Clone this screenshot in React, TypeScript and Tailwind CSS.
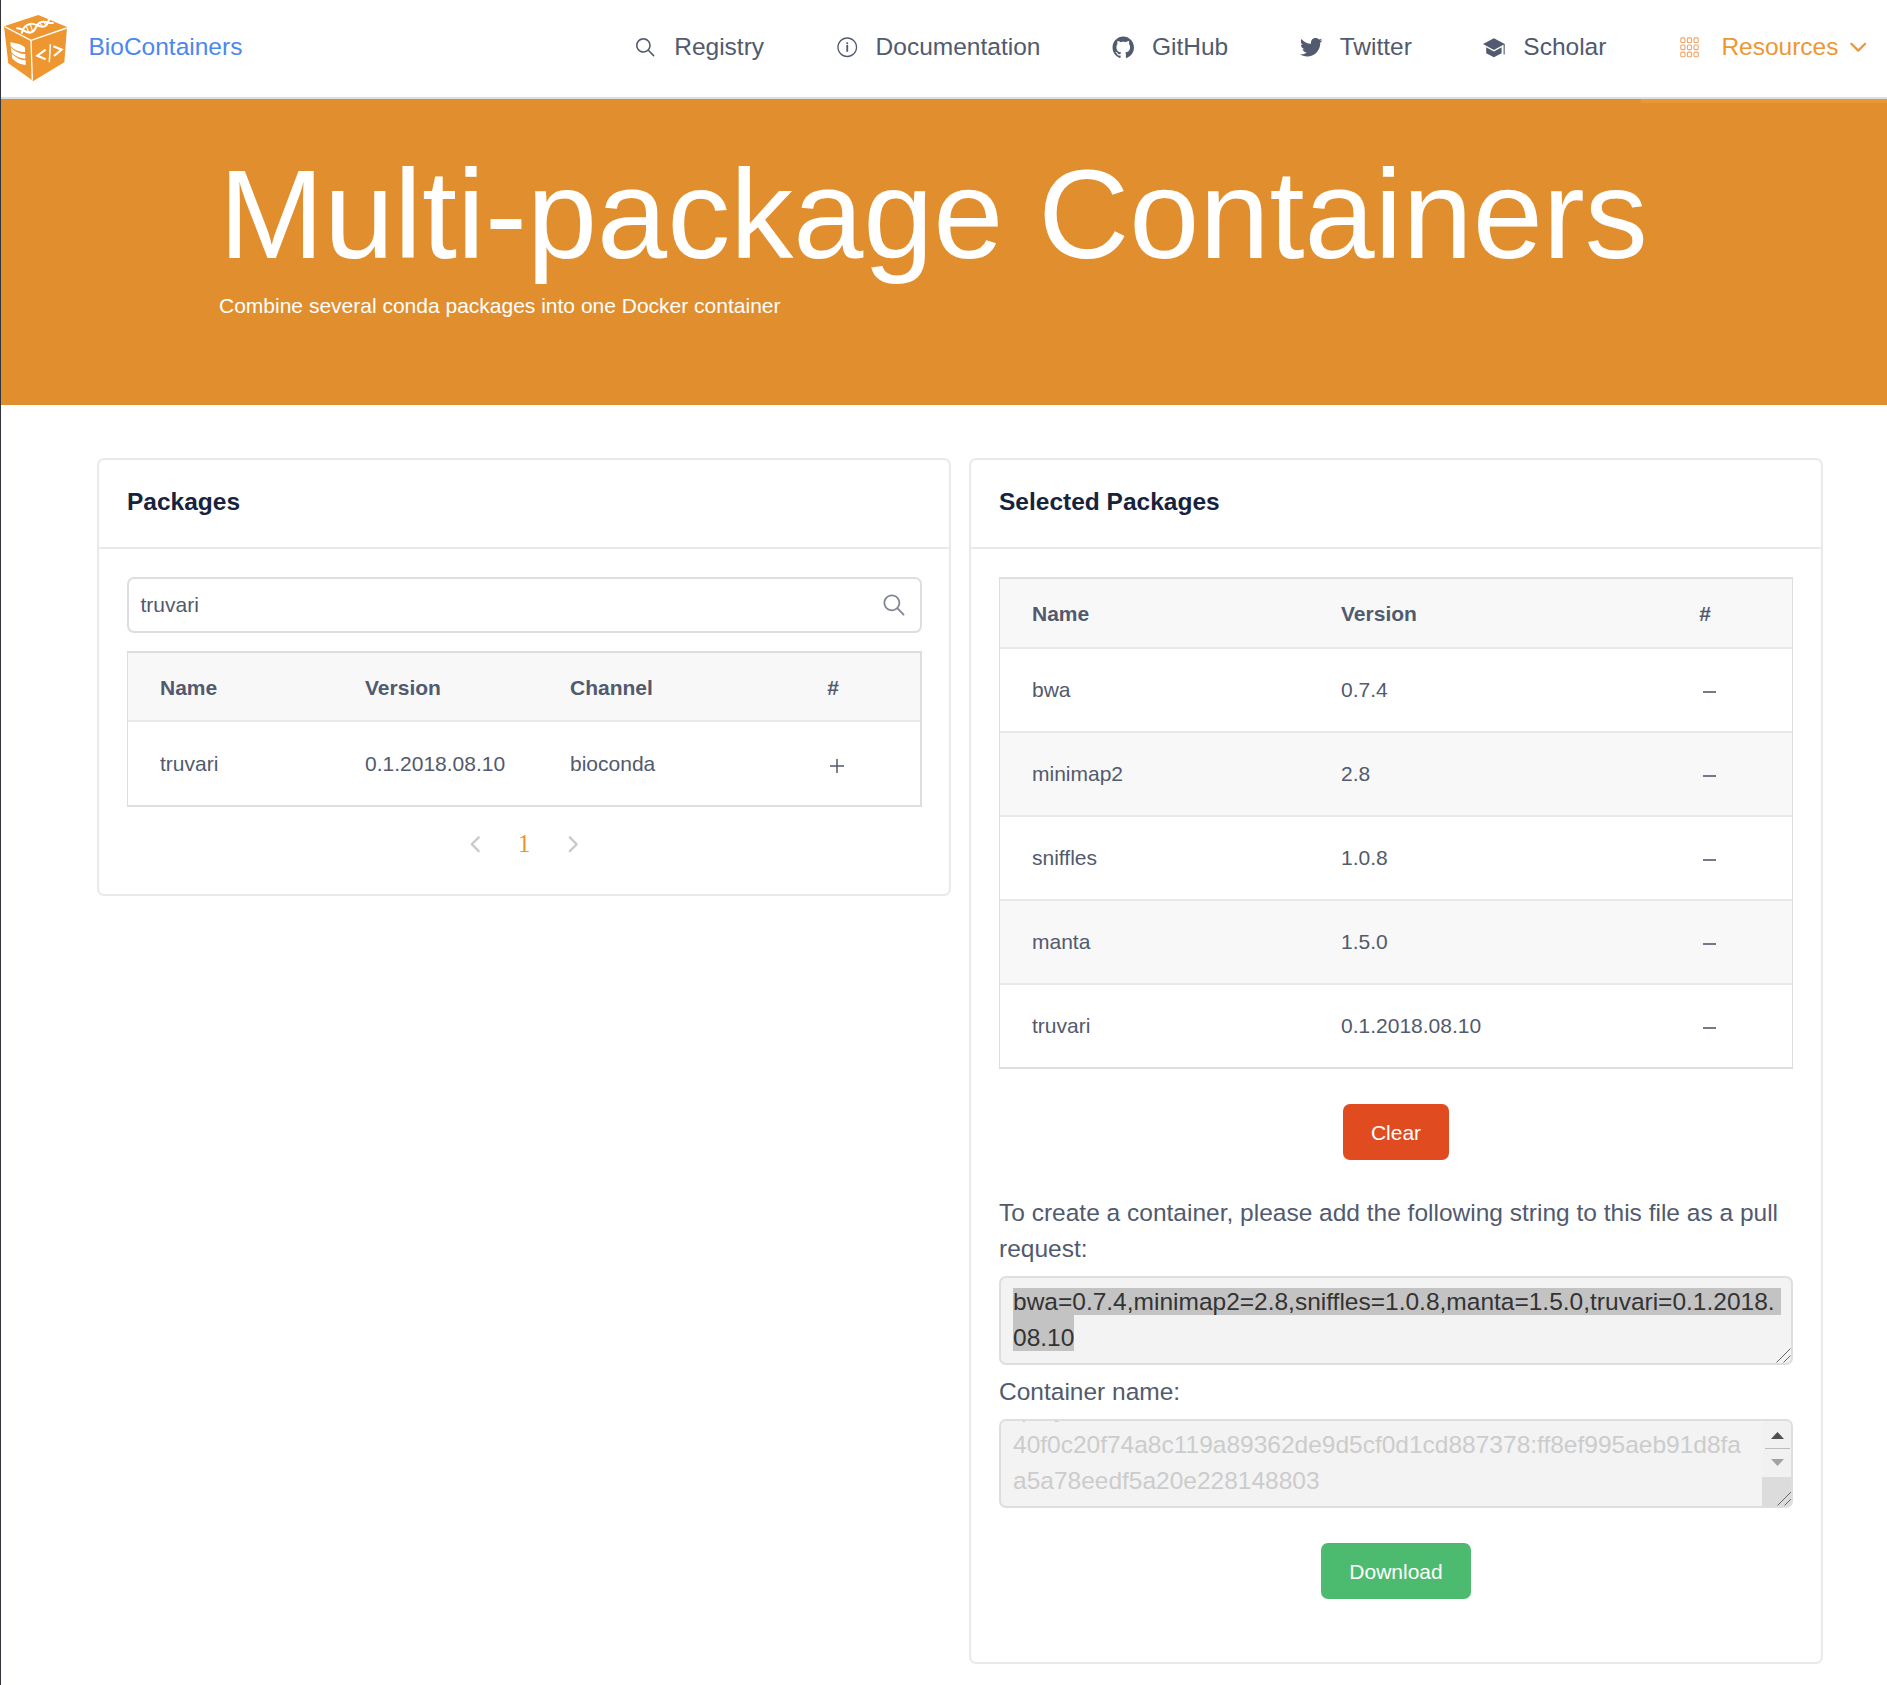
import React from "react";
import {
  IoIosArrowBack,
  IoIosArrowDown,
  IoIosArrowForward,
  IoIosInformationCircleOutline,
  IoIosSearch,
  IoLogoGithub,
  IoLogoTwitter,
} from "react-icons/io";

function Logo() {
  return (
    <svg className="h-[84px] w-[70px] shrink-0" viewBox="3 0 210 252">
      <path d="M115 45 L201 81 L193 187 L100 243 L25 190 L12 79 Z" fill="#ee962f" />
      <path d="M14 80 L93 121 L97 241 M93 121 L200 84" stroke="#fff" strokeWidth="4" fill="none" />
      {/* database cylinder */}
      <path
        d="M31 126 C40 130 66 130 75 143 L75 156 C58 156 42 150 32 138 Z M33 143 C46 156 62 162 76 162 L76 176 C60 175 44 168 34 156 Z M35 161 C48 174 64 181 77 181 L77 195 C62 194 46 187 36 174 Z"
        fill="#fff"
      />
      {/* code mark */}
      <path d="M137 149 L112 167 L137 178 M160 139 L185 149 L162 168" stroke="#fff" strokeWidth="6.5" fill="none" />
      <path d="M151 133 L148 187" stroke="#fff" strokeWidth="4.5" fill="none" />
      {/* helix */}
      <path
        d="M49 85 C68 82 72 99 90 98 C112 95 104 71 124 66 C140 62 146 73 161 68"
        stroke="#fff"
        strokeWidth="6.5"
        fill="none"
      />
      <path
        d="M65 101 C68 84 74 77 90 72 C106 67 116 85 134 79 C146 75 140 64 150 56"
        stroke="#fff"
        strokeWidth="6"
        fill="none"
      />
      <path d="M67 85 L73 95 M79 79 L86 96 M91 73 L98 95 M120 69 L127 79 M131 65 L138 76" stroke="#fff" strokeWidth="3.5" />
    </svg>
  );
}

function SchoolIcon() {
  return (
    <svg width="24.5" height="24.5" viewBox="0 0 24.5 24.5" fill="#515a6e">
      <path d="M1 9 L11.9 3.2 L22.8 9 L11.9 15 Z" />
      <path d="M4.2 12.3 L11.9 16.5 L19.6 12.3 V18.2 L11.9 22.2 L4.2 18.2 Z" />
      <path d="M21.6 9 H22.7 V19.5 H21.6 Z" />
    </svg>
  );
}

function KeypadIcon() {
  const cells = [0, 1, 2];
  return (
    <svg width="24.5" height="24.5" viewBox="0 0 24.5 24.5" fill="none" stroke="#f2a568" strokeWidth="1.1">
      {cells.map((r) =>
        cells.map((c) => <rect key={`${r}${c}`} x={3.8 + c * 6.6} y={2.9 + r * 7.1} width="4.2" height="4.6" rx="1" />),
      )}
    </svg>
  );
}

function NavItem({ icon, label, gap = "gap-[16.5px]" }: { icon: React.ReactNode; label: string; gap?: string }) {
  return (
    <a className={`flex items-center ${gap}`}>
      <span className="flex w-[24.5px] justify-center pt-px">{icon}</span>
      <span>{label}</span>
    </a>
  );
}

function Card({ title, className, children }: { title: string; className: string; children: React.ReactNode }) {
  return (
    <section className={`w-[854px] rounded-[7px] border-2 border-[#e8e9eb] bg-white ${className}`}>
      <h2 className="h-[89px] border-b-2 border-[#e8e9eb] px-7 pt-[23px] text-[24.5px] leading-[37px] font-bold text-[#17233d]">
        {title}
      </h2>
      <div className="px-7 pt-7">{children}</div>
    </section>
  );
}

const selected = [
  ["bwa", "0.7.4"],
  ["minimap2", "2.8"],
  ["sniffles", "1.0.8"],
  ["manta", "1.5.0"],
  ["truvari", "0.1.2018.08.10"],
];

function Grip() {
  return (
    <svg className="absolute right-0 bottom-0" width="16" height="16" viewBox="0 0 16 16">
      <path d="M1.5 15.5 L15.5 1.5 M8.5 15.5 L15.5 8.5" stroke="#666" strokeWidth="1" />
    </svg>
  );
}

export default function App() {
  return (
    <div className="h-[1685px] w-[1887px] overflow-hidden border-l border-[#33343a] bg-white font-['Liberation_Sans',Arial,sans-serif] text-[#515a6e]">
      <header className="flex h-[99px] items-start border-b-2 border-[#dcdee2] text-[24.5px] leading-[36px]">
        <Logo />
        <a className="mt-[29px] ml-[17.5px] text-[#4b87ee]">BioContainers</a>
        <nav className="mt-[29px] mr-[17px] ml-auto flex gap-[70.5px]">
          <NavItem icon={<IoIosSearch size={24.5} />} label="Registry" gap="gap-[17px]" />
          <NavItem icon={<IoIosInformationCircleOutline size={24.5} />} label="Documentation" />
          <NavItem icon={<IoLogoGithub size={24.5} />} label="GitHub" />
          <NavItem icon={<IoLogoTwitter size={24.5} />} label="Twitter" />
          <NavItem icon={<SchoolIcon />} label="Scholar" />
          <div className="flex items-center text-[#ed9733]">
            <NavItem icon={<KeypadIcon />} label="Resources" gap="gap-[20px]" />
            <IoIosArrowDown className="mt-px ml-[7px]" size={24.5} />
          </div>
        </nav>
      </header>

      <div className="h-[306px] bg-[#e18f2e] text-white">
        <div className="ml-auto h-1 w-[246px] bg-[#ec9832]" />
        <div className="ml-[218px]">
          <h1 className="pt-[37px] text-[126px] leading-[150px] whitespace-nowrap">Multi-package Containers</h1>
          <p className="text-[21px] leading-[32px]">Combine several conda packages into one Docker container</p>
        </div>
      </div>

      <main className="flex items-start gap-[18px] pt-[53px] pl-[96px]">
        <Card title="Packages" className="h-[438px]">
          <div className="flex h-14 w-[795px] items-center justify-between rounded-[7px] border-2 border-[#dcdee2] pr-[12px] pl-[11.5px] text-[21px]">
            <span>truvari</span>
            <IoIosSearch size={28} color="#808695" />
          </div>
          <div className="mt-[18px] h-[156px] w-[795px] border-2 border-l border-[#dcdee2] text-[21px]">
            <div className="grid h-[69px] grid-cols-[205px_205px_205px_1fr] items-center border-b-2 border-[#e8e9eb] bg-[#f8f8f9] pt-[2px] font-bold">
              <span className="pl-8">Name</span>
              <span className="pl-8">Version</span>
              <span className="pl-8">Channel</span>
              <span className="pl-[3px] text-center">#</span>
            </div>
            <div className="grid h-[83px] grid-cols-[205px_205px_205px_1fr] items-center">
              <span className="pl-8">truvari</span>
              <span className="pl-8">0.1.2018.08.10</span>
              <span className="pl-8">bioconda</span>
              <span className="flex justify-center pt-[4px] pl-[11px]">
                <svg width="14" height="14" viewBox="0 0 14 14">
                  <path d="M0 7 H14 M7 0 V14" stroke="#515a6e" strokeWidth="1.5" />
                </svg>
              </span>
            </div>
          </div>
          <div className="mt-[19px] flex h-9 items-center justify-center gap-[24.5px] text-[#c9cacc]">
            <IoIosArrowBack size={24.5} />
            <span className="w-[24px] text-center font-['Liberation_Serif',serif] text-[24.5px] text-[#f0932a]">1</span>
            <IoIosArrowForward size={24.5} />
          </div>
        </Card>

        <Card title="Selected Packages" className="h-[1206px]">
          <div className="w-[794px] border border-y-2 border-[#dcdee2] text-[21px]">
            <div className="grid h-[70px] grid-cols-[309px_309px_1fr] items-center border-b-2 border-[#e8e9eb] bg-[#f8f8f9] pt-[2px] font-bold">
              <span className="pl-8">Name</span>
              <span className="pl-8">Version</span>
              <span className="text-center">#</span>
            </div>
            {selected.map(([name, version]) => (
              <div
                key={name}
                className="grid h-[84px] grid-cols-[309px_309px_1fr] items-center border-b-2 border-[#e8e9eb] odd:bg-[#f8f8f9] even:bg-white last:h-[82px] last:border-b-0"
              >
                <span className="pl-8">{name}</span>
                <span className="pl-8">{version}</span>
                <span className="flex justify-center pt-[3px] pl-[8px]">
                  <svg width="13" height="2" viewBox="0 0 13 2">
                    <path d="M0 1 H13" stroke="#515a6e" strokeWidth="1.6" />
                  </svg>
                </span>
              </div>
            ))}
          </div>
          <div className="mt-[35px] flex justify-center">
            <button className="h-14 w-[106px] rounded-[7px] bg-[#e04b1f] pt-[2px] text-[21px] text-white">Clear</button>
          </div>
          <p className="mt-[35px] w-[794px] text-[24.5px] leading-[36px]">
            To create a container, please add the following string to this file as a pull request:
          </p>
          <div className="relative mt-[9px] h-[89px] w-[794px] rounded-[7px] border-2 border-[#dcdee2] bg-[#f3f3f3] pt-[10px] pl-3 text-[24.5px] text-[#333]">
            <div className="h-[27px] w-[768px] bg-[#c3c3c3] leading-[27px] whitespace-nowrap">
              bwa=0.7.4,minimap2=2.8,sniffles=1.0.8,manta=1.5.0,truvari=0.1.2018.
            </div>
            <div className="h-9 w-[61px] bg-[#c3c3c3] leading-[45px]">08.10</div>
            <Grip />
          </div>
          <div className="mt-[9px] text-[24.5px] leading-[36px]">Container name:</div>
          <div className="relative mt-[9px] h-[89px] w-[794px] overflow-hidden rounded-[7px] border-2 border-[#dcdee2] bg-[#f3f3f3] pl-3 text-[24.5px] leading-[36px] text-[#ccc]">
            <div className="-mt-[30px]">quay.io/biocontainers/mulled-v2-</div>
            <div className="whitespace-nowrap">40f0c20f74a8c119a89362de9d5cf0d1cd887378:ff8ef995aeb91d8fa</div>
            <div>a5a78eedf5a20e228148803</div>
            <div className="absolute top-0 -right-px h-[56px] w-[29px] bg-[#f1f1f1]">
              <svg width="29" height="56" viewBox="0 0 29 56">
                <path d="M8 18 L14.5 11 L21 18 Z" fill="#505050" />
                <path d="M2 27.5 H27" stroke="#bdbdbd" />
                <path d="M8 38 L14.5 45 L21 38 Z" fill="#a3a3a3" />
              </svg>
            </div>
            <div className="absolute -right-px bottom-0 h-[29px] w-[30px] bg-[#dcdcdc]">
              <Grip />
            </div>
          </div>
          <div className="mt-[35px] flex justify-center">
            <button className="h-14 w-[150px] rounded-[7px] bg-[#4dbb6f] pt-[2px] text-[21px] text-white">Download</button>
          </div>
        </Card>
      </main>
    </div>
  );
}
